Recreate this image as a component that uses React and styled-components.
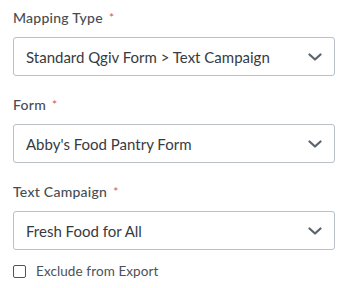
import React from 'react';
import styled, { createGlobalStyle } from 'styled-components';

const GlobalStyle = createGlobalStyle`
  html, body {
    margin: 0;
    padding: 0;
    background: #ffffff;
  }
  body {
    font-family: Lato, "Liberation Sans", Arial, sans-serif;
    -webkit-font-smoothing: antialiased;
  }
`;

const Form = styled.div`
  width: 322px;
  padding: 8px 13px 0;
  display: flex;
  flex-direction: column;
  gap: 19px;
`;

const Field = styled.div`
  display: flex;
  flex-direction: column;
  gap: 9px;
`;

const Label = styled.label`
  font-size: 14px;
  line-height: 20px;
  font-weight: 500;
  letter-spacing: 0.25px;
  color: #474d55;
`;

const Required = styled.span`
  color: #e05a55;
  font-size: 12px;
  margin-left: 6px;
  vertical-align: 1px;
`;

const SelectBox = styled.div`
  box-sizing: border-box;
  height: 39px;
  display: flex;
  align-items: center;
  justify-content: space-between;
  padding: 0 12px;
  border: 1px solid #b9c0c7;
  border-radius: 3px;
  background: #ffffff;
  font-size: 15px;
  color: #363b42;
`;

const Chevron = styled.svg`
  width: 14px;
  height: 8px;
  flex: none;
`;

const CheckRow = styled.label`
  display: flex;
  align-items: center;
  gap: 10px;
  margin-top: -6px;
  font-size: 13.5px;
  line-height: 16px;
  letter-spacing: 0.1px;
  color: #4b5159;
`;

const Box = styled.span`
  box-sizing: border-box;
  width: 13px;
  height: 13px;
  border: 1px solid #4f555c;
  border-radius: 2px;
  background: #ffffff;
`;

const Select = ({ value }) => (
  <SelectBox>
    <span>{value}</span>
    <Chevron viewBox="0 0 14 8">
      <path d="M1.5 1.5 L7 6.5 L12.5 1.5" fill="none" stroke="#5b636d" strokeWidth="2.2" strokeLinecap="round" strokeLinejoin="round" />
    </Chevron>
  </SelectBox>
);

const fields = [
  { label: 'Mapping Type', value: 'Standard Qgiv Form > Text Campaign' },
  { label: 'Form', value: "Abby's Food Pantry Form" },
  { label: 'Text Campaign', value: 'Fresh Food for All' },
];

const App = () => (
  <>
    <GlobalStyle />
    <Form>
      {fields.map((f) => (
        <Field key={f.label}>
          <Label>
            {f.label}
            <Required>*</Required>
          </Label>
          <Select value={f.value} />
        </Field>
      ))}
      <CheckRow>
        <Box />
        Exclude from Export
      </CheckRow>
    </Form>
  </>
);

export default App;
